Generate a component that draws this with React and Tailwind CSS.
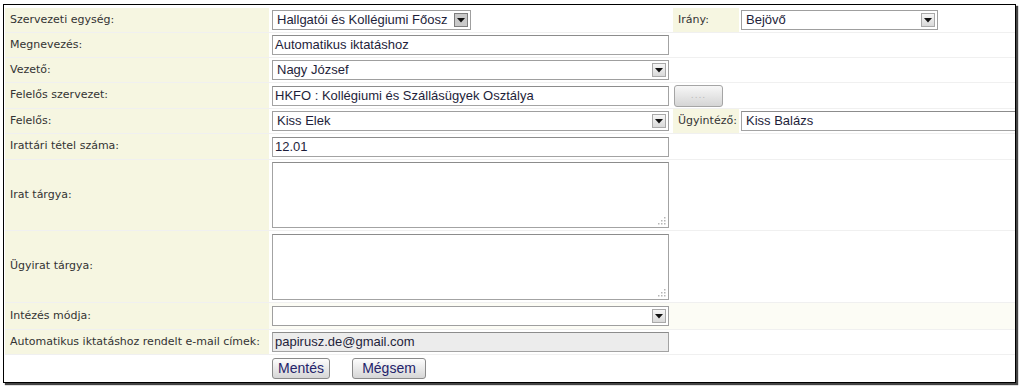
import React from 'react'

// legacy iktatás form, classic table-ish look

const Label = ({ children, w = 'w-[264px]' }) => (
    <div className={`${w} shrink-0 bg-[#f6f6e1] pl-[5px] flex items-center text-[11px] text-[#333] font-['DejaVu_Sans',Verdana,sans-serif] whitespace-nowrap`}>
        {children}
    </div>
)

const Arrow = ({ dark }) => (
    <div
        className={`absolute right-[2px] top-[2px] w-[14px] h-[14px] flex items-center justify-center border ${
            dark ? 'border-[#7d7d7d] bg-[#c9c9c9]' : 'border-[#a9a9a9] bg-gradient-to-b from-[#f6f6f6] to-[#d9d9d9]'
        }`}
    >
        <svg width="8" height="5" viewBox="0 0 8 5">
            <path d="M0 0 L8 0 L4 4.5 Z" fill="#111" />
        </svg>
    </div>
)

const Select = ({ value, w, dark }) => (
    <div className={`${w} relative h-[20px] border border-[#9f9f9f] bg-white flex items-center pl-[4px] text-[13px] text-[#1e1e3a] font-['Liberation_Sans',Arial,sans-serif] whitespace-nowrap`}>
        <span className="flex-1 mr-[17px]">{value}</span>
        <Arrow dark={dark} />
    </div>
)

const Input = ({ value, w = 'w-[397px]', disabled }) => (
    <div
        className={`${w} shrink-0 h-[20px] border border-[#a3a3a3] border-t-[#8c8c8c] flex items-center pl-[2px] text-[13px] text-[#1e1e3a] font-['Liberation_Sans',Arial,sans-serif] whitespace-nowrap ${
            disabled ? 'bg-[#ececec]' : 'bg-white'
        }`}
    >
        {value}
    </div>
)

const Grip = () => (
    <svg className="absolute right-[2px] bottom-[2px]" width="9" height="9" viewBox="0 0 9 9">
        {[
            [7, 1],
            [4, 4],
            [7, 4],
            [1, 7],
            [4, 7],
            [7, 7]
        ].map(([x, y], i) => (
            <rect key={i} x={x} y={y} width="1.5" height="1.5" fill="#b5b5b5" />
        ))}
    </svg>
)

const TextArea = () => (
    <div className="relative w-[397px] h-[66px] border border-[#a3a3a3] border-t-[#8c8c8c] bg-white">
        <Grip />
    </div>
)

const Row = ({ h = 'h-[25px]', bg = '', children }) => (
    <div className={`flex ${h} ${bg} border-b border-[#f0f0f0]`}>{children}</div>
)

const Field = ({ children, w = 'w-[403px]' }) => (
    <div className={`${w} shrink-0 pl-[3px] flex items-center`}>{children}</div>
)

const Btn = ({ children, w }) => (
    <button className={`${w} h-[21px] rounded-[3px] border border-[#8a8a8a] bg-gradient-to-b from-[#fdfdfd] to-[#d6d6d6] text-[14px] text-[#23236b] font-['Liberation_Sans',Arial,sans-serif] leading-none`}>
        {children}
    </button>
)

export default function App() {
    return (
        <div className="bg-white w-[1023px] h-[390px] pl-[3px] pt-[4px]">
            <div className="w-[1013px] h-[379px] border border-black shadow-[2px_2px_1px_#444] bg-white pt-[3px] pl-px overflow-hidden">
                <Row>
                    <Label>Szervezeti egység:</Label>
                    <Field>
                        <Select value="Hallgatói és Kollégiumi Főosz" w="w-[199px]" dark />
                    </Field>
                    <Label w="w-[66px] ml-px pl-[3px]">Irány:</Label>
                    <div className="pl-[2px] flex items-center">
                        <Select value="Bejövő" w="w-[197px]" />
                    </div>
                </Row>
                <Row>
                    <Label>Megnevezés:</Label>
                    <Field>
                        <Input value="Automatikus iktatáshoz" />
                    </Field>
                </Row>
                <Row>
                    <Label>Vezető:</Label>
                    <Field>
                        <Select value="Nagy József" w="w-[397px]" />
                    </Field>
                </Row>
                <Row h="h-[26px]">
                    <Label>Felelős szervezet:</Label>
                    <Field>
                        <Input value="HKFO : Kollégiumi és Szállásügyek Osztálya" />
                    </Field>
                    <div className="pl-[2px] flex items-center">
                        <button className="w-[49px] h-[22px] rounded-[3px] border border-[#a5a5a5] bg-gradient-to-b from-[#f7f7f7] to-[#d5d5d5] text-[9px] tracking-[1px] text-[#b9b9b9] font-['DejaVu_Sans',sans-serif] leading-none">
                            ....
                        </button>
                    </div>
                </Row>
                <Row>
                    <Label>Felelős:</Label>
                    <Field>
                        <Select value="Kiss Elek" w="w-[397px]" />
                    </Field>
                    <Label w="w-[66px] ml-px pl-[2px]">Ügyintéző:</Label>
                    <div className="pl-[2px] flex items-center">
                        <Input value="Kiss Balázs" w="w-[280px] pl-[4px]" />
                    </div>
                </Row>
                <Row h="h-[26px]">
                    <Label>Irattári tétel száma:</Label>
                    <Field>
                        <Input value="12.01" />
                    </Field>
                </Row>
                <Row h="h-[71px]">
                    <Label>Irat tárgya:</Label>
                    <Field>
                        <TextArea />
                    </Field>
                </Row>
                <Row h="h-[72px]">
                    <Label>Ügyirat tárgya:</Label>
                    <Field>
                        <TextArea />
                    </Field>
                </Row>
                <Row h="h-[27px]" bg="bg-[#fcfcf5]">
                    <Label>Intézés módja:</Label>
                    <Field>
                        <Select value="" w="w-[397px]" />
                    </Field>
                </Row>
                <Row>
                    <Label>Automatikus iktatáshoz rendelt e-mail címek:</Label>
                    <Field>
                        <Input value="papirusz.de@gmail.com" disabled />
                    </Field>
                </Row>
                <div className="flex h-[26px]">
                    <div className="w-[264px] shrink-0" />
                    <div className="pl-[3px] flex items-center gap-[22px]">
                        <Btn w="w-[58px]">Mentés</Btn>
                        <Btn w="w-[74px]">Mégsem</Btn>
                    </div>
                </div>
            </div>
        </div>
    )
}
